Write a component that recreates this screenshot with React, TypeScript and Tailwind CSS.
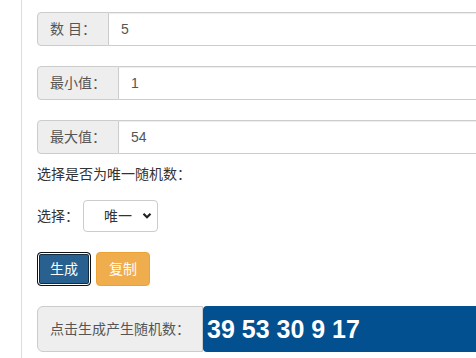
import React from "react";

const font = { fontFamily: "'Liberation Sans', 'Noto Sans CJK SC', sans-serif" };

function Field({ label, value }: { label: string; value: string }) {
  return (
    <div className="flex h-[34px] w-[560px] text-[14px] text-[#555]">
      <span className="flex items-center whitespace-pre rounded-l-[4px] border border-[#ccc] bg-[#eee] px-3">
        {label}
      </span>
      <input
        readOnly
        value={value}
        className="flex-1 border border-l-0 border-[#ccc] bg-white px-3 text-[14px] text-[#555] shadow-[inset_0_1px_1px_rgba(0,0,0,0.075)] outline-none"
        style={font}
      />
    </div>
  );
}

export default function App() {
  return (
    <div className="h-[358px] w-[476px] overflow-hidden bg-white text-[14px] leading-[20px] text-[#333]" style={font}>
      <div className="ml-[21px] h-full border-l border-[#ddd] pl-[15px] pt-3">
        <Field label="数 目：" value="5" />
        <div className="mt-5">
          <Field label="最小值：" value="1" />
        </div>
        <div className="mt-5">
          <Field label="最大值：" value="54" />
        </div>
        <p className="mt-[10px]">选择是否为唯一随机数：</p>
        <div className="mt-4 flex items-center gap-[4px]">
          <span>选择：</span>
          <div className="relative">
            <select
              className="h-[32px] w-[75px] appearance-none rounded-[4px] border border-[#ccc] bg-white pl-[20px] text-[14px] text-[#333] outline-none"
              style={font}
              defaultValue="唯一"
            >
              <option>唯一</option>
              <option>不唯一</option>
            </select>
            <svg
              className="pointer-events-none absolute right-[6px] top-[12px]"
              width="10"
              height="8"
              viewBox="0 0 10 8"
            >
              <path d="M1.5 1.8 L5 5.3 L8.5 1.8" fill="none" stroke="#222" strokeWidth="2.2" />
            </svg>
          </div>
        </div>
        <div className="mt-5 flex gap-[5px]">
          <button
            className="h-[34px] w-[54px] rounded-[4px] border border-[#111] bg-[#286090] text-white shadow-[inset_0_0_0_1px_#fff,inset_0_0_0_2px_#122b40]"
            style={font}
          >
            生成
          </button>
          <button
            className="h-[34px] w-[54px] rounded-[4px] border border-[#eea236] bg-[#f0ad4e] text-white"
            style={font}
          >
            复制
          </button>
        </div>
        <div className="mt-5 flex h-[46px] w-[560px]">
          <span className="flex items-center whitespace-nowrap rounded-l-[6px] border border-[#ccc] bg-[#eee] px-3 text-[#555]">
            点击生成产生随机数：
          </span>
          <div className="flex flex-1 items-center rounded-[4px] bg-[#02508f] pl-[4px] text-[25px] font-bold text-white">
            39 53 30 9 17
          </div>
        </div>
      </div>
    </div>
  );
}
